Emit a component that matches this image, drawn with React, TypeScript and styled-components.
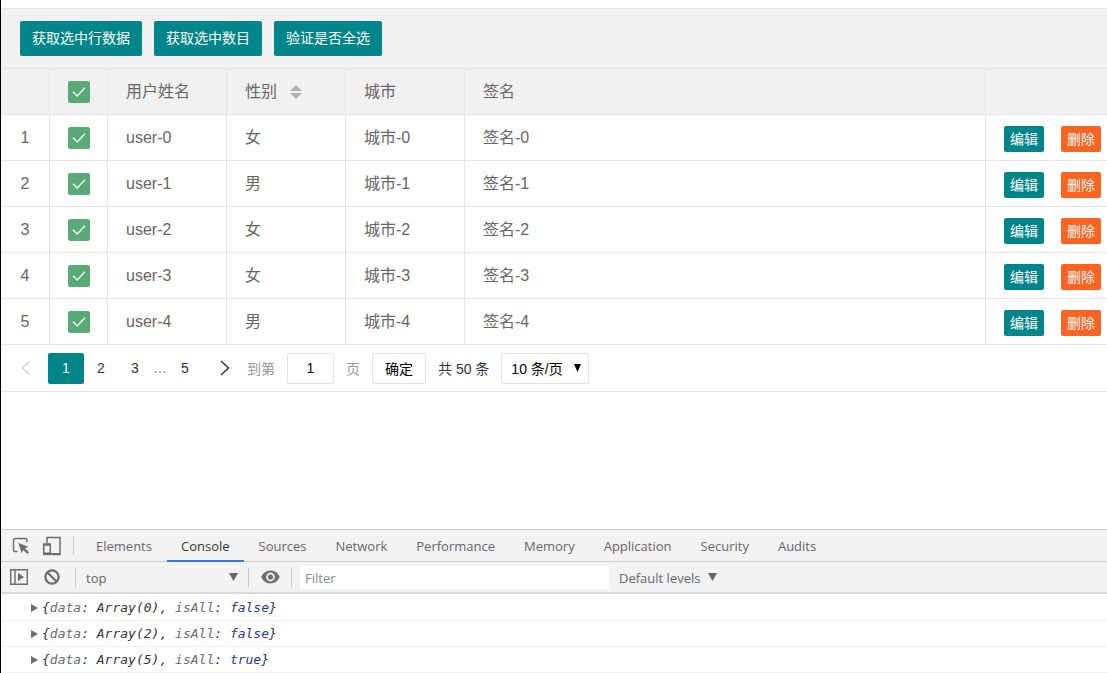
import React, { useState } from "react";
import styled, { createGlobalStyle, css } from "styled-components";

const teal = "#00868a";
const orange = "#ff6321";
const green = "#58ab76";
const line = "#e6e6e6";
const sans = `"Liberation Sans", "Noto Sans CJK SC", sans-serif`;
const uiSans = `"Open Sans", "Noto Sans", sans-serif`;

const GlobalStyle = createGlobalStyle`
  *, *::before, *::after { box-sizing: border-box; }
  body { margin: 0; background: #fff; font-family: ${sans}; color: #666; }
  button, input, select { font-family: inherit; margin: 0; }
`;

const Page = styled.div`
  display: flex;
  flex-direction: column;
  min-height: 100vh;
  border-left: 1px solid #000;
`;

const Main = styled.main`
  flex: 1;
  padding-top: 8px;
`;

const ActionBar = styled.div`
  display: flex;
  gap: 12px;
  padding: 12px 19px;
  background: #f1f1f1;
  border-top: 1px solid ${line};
  border-bottom: 1px solid ${line};
`;

const ActionButton = styled.button`
  height: 35px;
  padding: 0 12px;
  border: 0;
  border-radius: 2px;
  background: ${teal};
  color: #fff;
  font-size: 14px;
  line-height: 35px;
  white-space: nowrap;
  cursor: pointer;
`;

const Table = styled.table`
  width: 100%;
  table-layout: fixed;
  border-collapse: separate;
  border-spacing: 0;
`;

const Col = styled.col<{ $width?: number }>`
  ${(p) => p.$width && css`width: ${p.$width}px;`}
`;

const cell = css`
  height: 46px;
  border-right: 1px solid ${line};
  border-bottom: 1px solid ${line};
  font-size: 16px;
  font-weight: 400;
  line-height: 24px;
  vertical-align: middle;
  white-space: nowrap;
  &:last-child { border-right: 0; }
`;

const HeadCell = styled.th<{ $center?: boolean }>`
  ${cell}
  padding: 0 ${(p) => (p.$center ? 0 : 18)}px;
  text-align: ${(p) => (p.$center ? "center" : "left")};
  background: #f1f1f1;
`;

const Cell = styled.td<{ $center?: boolean }>`
  ${cell}
  padding: 0 ${(p) => (p.$center ? 0 : 18)}px;
  text-align: ${(p) => (p.$center ? "center" : "left")};
`;

const CheckWrap = styled.label`
  display: grid;
  place-content: center;
  > * { grid-area: 1 / 1; }
  svg { pointer-events: none; }
`;

const CheckInput = styled.input`
  appearance: none;
  width: 22px;
  height: 22px;
  border: 1px solid #d2d2d2;
  border-radius: 2px;
  background: #fff;
  cursor: pointer;
  &:checked { background: ${green}; border-color: ${green}; }
`;

const SortLabel = styled.span`
  display: flex;
  align-items: center;
  gap: 13px;
`;

const SortButton = styled.button`
  display: flex;
  padding: 0;
  border: 0;
  background: none;
  cursor: pointer;
`;

const RowActions = styled.div`
  display: flex;
  gap: 17px;
  padding-top: 3px;
`;

const RowButton = styled.button<{ $tone: string }>`
  flex: none;
  height: 26px;
  padding: 0 6px;
  border: 0;
  border-radius: 2px;
  background: ${(p) => p.$tone};
  color: #fff;
  font-size: 14px;
  line-height: 26px;
  cursor: pointer;
`;

const Pager = styled.nav`
  display: flex;
  align-items: center;
  height: 47px;
  padding-left: 2px;
  border-bottom: 1px solid ${line};
  color: #333;
  font-size: 14px;
  white-space: nowrap;
`;

const PageStep = styled.button`
  display: grid;
  place-items: center;
  width: 45px;
  height: 31px;
  padding: 0;
  border: 0;
  background: none;
  cursor: pointer;
`;

const PageButton = styled.button<{ $current?: boolean }>`
  width: ${(p) => (p.$current ? 36 : 34)}px;
  height: 31px;
  padding: 0;
  border: 0;
  border-radius: 2px;
  background: ${(p) => (p.$current ? teal : "transparent")};
  color: ${(p) => (p.$current ? "#fff" : "#333")};
  font-size: 14px;
  cursor: pointer;
`;

const Ellipsis = styled.span`
  width: 16px;
  text-align: center;
  color: #777;
`;

const JumpLabel = styled.label`
  display: flex;
  align-items: center;
  gap: 12px;
  color: #999;
`;

const PageInput = styled.input`
  width: 47px;
  height: 31px;
  border: 1px solid #e2e2e2;
  border-radius: 2px;
  background: #fff;
  color: #000;
  font-size: 14px;
  text-align: center;
`;

const ConfirmButton = styled.button`
  height: 31px;
  margin: 0 12px;
  padding: 0 12px;
  border: 1px solid #e2e2e2;
  border-radius: 2px;
  background: #fff;
  color: #000;
  font-size: 14px;
  cursor: pointer;
`;

const SelectWrap = styled.span<{ $inset: number }>`
  display: inline-grid;
  align-items: center;
  > * { grid-area: 1 / 1; }
  svg {
    justify-self: end;
    margin-right: ${(p) => p.$inset}px;
    pointer-events: none;
  }
`;

const LimitSelect = styled.select`
  appearance: none;
  width: 88px;
  height: 31px;
  margin-left: 12px;
  padding: 2px 9px 0;
  border: 1px solid #e2e2e2;
  border-radius: 2px;
  background: #fff;
  color: #000;
  font-size: 14px;
`;

const DevTools = styled.section`
  border-top: 1px solid #cdcdcd;
  font-family: ${uiSans};
  font-size: 13px;
  color: #666;
`;

const TabBar = styled.div`
  display: flex;
  align-items: center;
  height: 32px;
  padding-left: 10px;
  background: #f3f3f3;
  border-bottom: 1px solid #cdcdcd;
`;

const IconButton = styled.button<{ $width?: number }>`
  display: grid;
  place-items: center;
  flex: none;
  width: ${(p) => p.$width ?? 20}px;
  height: 22px;
  padding: 0;
  border: 0;
  background: none;
  color: #6e6e6e;
  cursor: pointer;
`;

const Separator = styled.span`
  flex: none;
  width: 1px;
  height: 19px;
  background: #ccc;
`;

const IconGroup = styled.div`
  display: flex;
  align-items: center;
  gap: 11px;
`;

const Tabs = styled.div`
  display: flex;
  align-self: stretch;
  gap: 1px;
  margin-left: 8px;
`;

const Tab = styled.button<{ $active?: boolean }>`
  height: 32px;
  padding: 2px 14px 0;
  border: 0;
  border-bottom: 2px solid ${(p) => (p.$active ? "#3b79cc" : "transparent")};
  background: none;
  color: ${(p) => (p.$active ? "#333" : "#666")};
  font-size: 13px;
  white-space: nowrap;
  cursor: pointer;
`;

const ConsoleBar = styled.div`
  display: flex;
  align-items: center;
  height: 32px;
  padding-left: 8px;
  background: #f3f3f3;
  border-bottom: 2px solid #dadada;
`;

const BarSelect = styled.select<{ $width: number }>`
  appearance: none;
  width: ${(p) => p.$width}px;
  height: 22px;
  padding: 2px 10px 0;
  border: 0;
  background: none;
  color: #666;
  font-size: 13px;
`;

const FilterInput = styled.input`
  flex: 0 1 309px;
  min-width: 80px;
  height: 23px;
  margin-left: 8px;
  padding: 2px 5px 0;
  border: 0;
  background: #fff;
  color: #333;
  font-size: 13px;
  &::placeholder { color: #888; opacity: 1; }
`;

const Log = styled.ul`
  margin: 0;
  padding: 1px 0 0;
  list-style: none;
  font-family: "DejaVu Sans Mono", monospace;
  font-size: 13px;
  font-style: italic;
  color: #333;
`;

const LogRow = styled.li`
  display: flex;
  align-items: center;
  gap: 4px;
  height: 26px;
  padding-left: 30px;
  border-bottom: 1px solid #f0f0f0;
  white-space: pre;
`;

const Key = styled.span`
  color: #6a6a6a;
`;

const Bool = styled.span`
  color: #1f35a8;
`;

const DownArrow = ({ color = "#666", width = 9 }: { color?: string; width?: number }) => (
  <svg width={width} height="8" viewBox="0 0 9 8" preserveAspectRatio="none" aria-hidden="true">
    <path d="M0 0H9L4.5 8Z" fill={color} />
  </svg>
);

const Checkbox = ({ label, checked, onChange }: { label: string; checked: boolean; onChange: () => void }) => (
  <CheckWrap>
    <CheckInput type="checkbox" aria-label={label} checked={checked} onChange={onChange} />
    {checked && (
      <svg width="22" height="22" viewBox="0 0 22 22" fill="none" stroke="#fff" strokeWidth="1.3" aria-hidden="true">
        <path d="M5 10.8L9.2 15L17 6.8" />
      </svg>
    )}
  </CheckWrap>
);

const InspectIcon = () => (
  <svg width="18" height="18" viewBox="0 0 18 18" aria-hidden="true">
    <path d="M5.5 14.5H3Q1.5 14.5 1.5 13V3Q1.5 1.5 3 1.5H13.5Q15 1.5 15 3V5.5" fill="none" stroke="currentColor" strokeWidth="1.4" />
    <path d="M6.5 6L16.5 9.7L13 11.3L17 15.3L15.3 17L11.3 13L9.7 16.3Z" fill="currentColor" />
  </svg>
);

const DeviceIcon = () => (
  <svg width="20" height="20" viewBox="0 0 20 20" fill="none" stroke="currentColor" strokeWidth="1.5" aria-hidden="true">
    <path d="M5 7V1.5H18V18.5H9.5" />
    <rect x="1.7" y="8" width="6.6" height="10.5" />
    <path d="M1.5 9H8.5M1.5 17.3H8.5M9 17.8H18" />
  </svg>
);

const SidebarIcon = () => (
  <svg width="18" height="16" viewBox="0 0 18 16" aria-hidden="true">
    <path d="M.7.7H17.3V15.3H.7ZM5 .7V15.3" fill="none" stroke="currentColor" strokeWidth="1.4" />
    <path d="M8 4L14 8L8 12Z" fill="currentColor" />
  </svg>
);

const ClearIcon = () => (
  <svg width="16" height="16" viewBox="0 0 16 16" fill="none" stroke="currentColor" strokeWidth="2.2" aria-hidden="true">
    <circle cx="8" cy="8" r="6.6" />
    <path d="M3.3 3.3L12.7 12.7" />
  </svg>
);

const EyeIcon = () => (
  <svg width="19" height="14" viewBox="0 0 19 14" aria-hidden="true">
    <path
      fillRule="evenodd"
      fill="currentColor"
      d="M.3 7C2 3 5.3.6 9.5.6S17 3 18.7 7C17 11 13.7 13.4 9.5 13.4S2 11 .3 7ZM9.5 2.6A4.4 4.4 0 1 0 9.5 11.4A4.4 4.4 0 1 0 9.5 2.6ZM9.5 4.4A2.6 2.6 0 1 1 9.5 9.6A2.6 2.6 0 1 1 9.5 4.4Z"
    />
  </svg>
);

const sexes = ["女", "男", "女", "女", "男"];
const tabs = ["Elements", "Console", "Sources", "Network", "Performance", "Memory", "Application", "Security", "Audits"];
const logs = [
  { count: 0, isAll: false },
  { count: 2, isAll: false },
  { count: 5, isAll: true },
];

export default function App() {
  const [picked, setPicked] = useState<boolean[]>(sexes.map(() => true));
  const [tab, setTab] = useState("Console");
  const all = picked.every(Boolean);

  return (
    <Page>
      <GlobalStyle />
      <Main>
        <ActionBar>
          <ActionButton>获取选中行数据</ActionButton>
          <ActionButton>获取选中数目</ActionButton>
          <ActionButton>验证是否全选</ActionButton>
        </ActionBar>

        <Table>
          <colgroup>
            <Col $width={49} />
            <Col $width={58} />
            <Col $width={119} />
            <Col $width={119} />
            <Col $width={119} />
            <Col />
            <Col $width={121} />
          </colgroup>
          <thead>
            <tr>
              <HeadCell />
              <HeadCell $center>
                <Checkbox label="全选" checked={all} onChange={() => setPicked(picked.map(() => !all))} />
              </HeadCell>
              <HeadCell>用户姓名</HeadCell>
              <HeadCell>
                <SortLabel>
                  性别
                  <SortButton aria-label="排序">
                    <svg width="12" height="14" viewBox="0 0 12 14" fill="#b2b2b2" aria-hidden="true">
                      <path d="M6 0L12 6H0ZM0 8H12L6 14Z" />
                    </svg>
                  </SortButton>
                </SortLabel>
              </HeadCell>
              <HeadCell>城市</HeadCell>
              <HeadCell>签名</HeadCell>
              <HeadCell />
            </tr>
          </thead>
          <tbody>
            {sexes.map((sex, i) => (
              <tr key={i}>
                <Cell $center>{i + 1}</Cell>
                <Cell $center>
                  <Checkbox
                    label={`user-${i}`}
                    checked={picked[i]}
                    onChange={() => setPicked(picked.map((v, n) => (n === i ? !v : v)))}
                  />
                </Cell>
                <Cell>user-{i}</Cell>
                <Cell>{sex}</Cell>
                <Cell>城市-{i}</Cell>
                <Cell>签名-{i}</Cell>
                <Cell>
                  <RowActions>
                    <RowButton $tone={teal}>编辑</RowButton>
                    <RowButton $tone={orange}>删除</RowButton>
                  </RowActions>
                </Cell>
              </tr>
            ))}
          </tbody>
        </Table>

        <Pager aria-label="分页">
          <PageStep aria-label="上一页">
            <svg width="10" height="16" viewBox="0 0 10 16" fill="none" stroke="#d2d2d2" strokeWidth="1.5">
              <path d="M9 1L1.5 8L9 15" />
            </svg>
          </PageStep>
          <PageButton $current>1</PageButton>
          <PageButton>2</PageButton>
          <PageButton>3</PageButton>
          <Ellipsis>…</Ellipsis>
          <PageButton>5</PageButton>
          <PageStep aria-label="下一页">
            <svg width="10" height="16" viewBox="0 0 10 16" fill="none" stroke="#333" strokeWidth="1.5">
              <path d="M1 1L8.5 8L1 15" />
            </svg>
          </PageStep>
          <JumpLabel>
            到第
            <PageInput defaultValue="1" />
            页
          </JumpLabel>
          <ConfirmButton>确定</ConfirmButton>
          <span>共 50 条</span>
          <SelectWrap $inset={8}>
            <LimitSelect aria-label="每页条数">
              <option>10 条/页</option>
              <option>20 条/页</option>
            </LimitSelect>
            <DownArrow color="#000" width={7} />
          </SelectWrap>
        </Pager>
      </Main>

      <DevTools>
        <TabBar>
          <IconGroup>
            <IconButton aria-label="Inspect"><InspectIcon /></IconButton>
            <IconButton aria-label="Device toolbar"><DeviceIcon /></IconButton>
            <Separator />
          </IconGroup>
          <Tabs role="tablist">
            {tabs.map((name) => (
              <Tab key={name} role="tab" aria-selected={tab === name} $active={tab === name} onClick={() => setTab(name)}>
                {name}
              </Tab>
            ))}
          </Tabs>
        </TabBar>
        <ConsoleBar>
          <IconGroup>
            <IconButton aria-label="Show sidebar"><SidebarIcon /></IconButton>
            <IconButton $width={24} aria-label="Clear console"><ClearIcon /></IconButton>
            <Separator />
          </IconGroup>
          <SelectWrap $inset={10}>
            <BarSelect aria-label="Context" $width={172}>
              <option>top</option>
            </BarSelect>
            <DownArrow />
          </SelectWrap>
          <Separator />
          <IconButton $width={42} aria-label="Live expression"><EyeIcon /></IconButton>
          <Separator />
          <FilterInput aria-label="Filter" placeholder="Filter" />
          <SelectWrap $inset={1}>
            <BarSelect aria-label="Log level" $width={109}>
              <option>Default levels</option>
            </BarSelect>
            <DownArrow />
          </SelectWrap>
        </ConsoleBar>
        <Log>
          {logs.map((log) => (
            <LogRow key={log.count}>
              <svg width="7" height="8" viewBox="0 0 7 8" aria-hidden="true">
                <path d="M0 0L7 4L0 8Z" fill="#6e6e6e" />
              </svg>
              <span>
                {"{"}
                <Key>data</Key>: Array({log.count}), <Key>isAll</Key>: <Bool>{String(log.isAll)}</Bool>
                {"}"}
              </span>
            </LogRow>
          ))}
        </Log>
      </DevTools>
    </Page>
  );
}
